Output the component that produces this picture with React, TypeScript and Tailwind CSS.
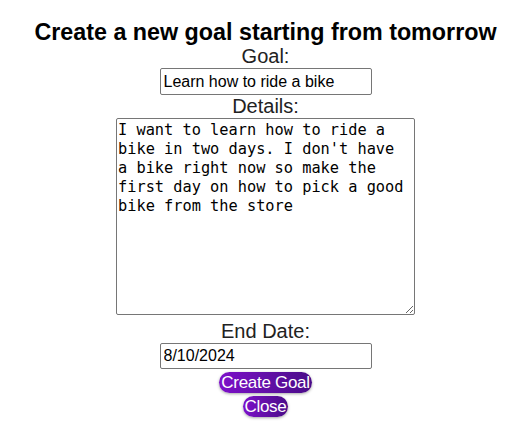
export default function App() {
  return (
    <div className="min-h-screen bg-white font-['Liberation_Sans',Arial,sans-serif] text-black">
      <form className="flex flex-col items-center pt-[20px]">
        <h2 className="text-[23.3px] font-bold leading-[25px]">Create a new goal starting from tomorrow</h2>

        <label className="text-[20px] leading-[23px] text-[#222]">Goal:</label>
        <input
          type="text"
          defaultValue="Learn how to ride a bike"
          className="w-[212px] h-[27px] border border-[#767676] rounded-[2px] px-[3px] text-[16px] outline-none"
        />

        <label className="text-[20px] leading-[23px] text-[#222]">Details:</label>
        <textarea
          defaultValue="I want to learn how to ride a bike in two days. I don't have a bike right now so make the first day on how to pick a good bike from the store"
          className="w-[299px] h-[197px] border border-[#767676] rounded-[2px] pl-[1px] pr-[8px] py-[2px] font-['DejaVu_Sans_Mono',monospace] text-[15.3px] leading-[19px] outline-none"
        />

        <label className="mt-[4px] text-[20px] leading-[24px] text-[#222]">End Date:</label>
        <input
          type="text"
          defaultValue="8/10/2024"
          className="w-[212px] h-[26px] border border-[#767676] rounded-[2px] px-[3px] text-[16px] outline-none"
        />

        <button
          type="button"
          className="mt-[3px] h-[21px] px-[2px] rounded-full bg-gradient-to-r from-[#7d10c9] to-[#4a0c88] text-white text-[17px] leading-[21px] shadow-[0_1px_3px_rgba(0,0,0,0.35)] tracking-[-0.3px]"
        >
          Create Goal
        </button>
        <button
          type="button"
          className="mt-[3px] h-[21px] px-[2px] rounded-full bg-gradient-to-r from-[#7d10c9] to-[#4a0c88] text-white text-[17px] leading-[21px] shadow-[0_1px_3px_rgba(0,0,0,0.35)] tracking-[-0.3px]"
        >
          Close
        </button>
      </form>
    </div>
  )
}
